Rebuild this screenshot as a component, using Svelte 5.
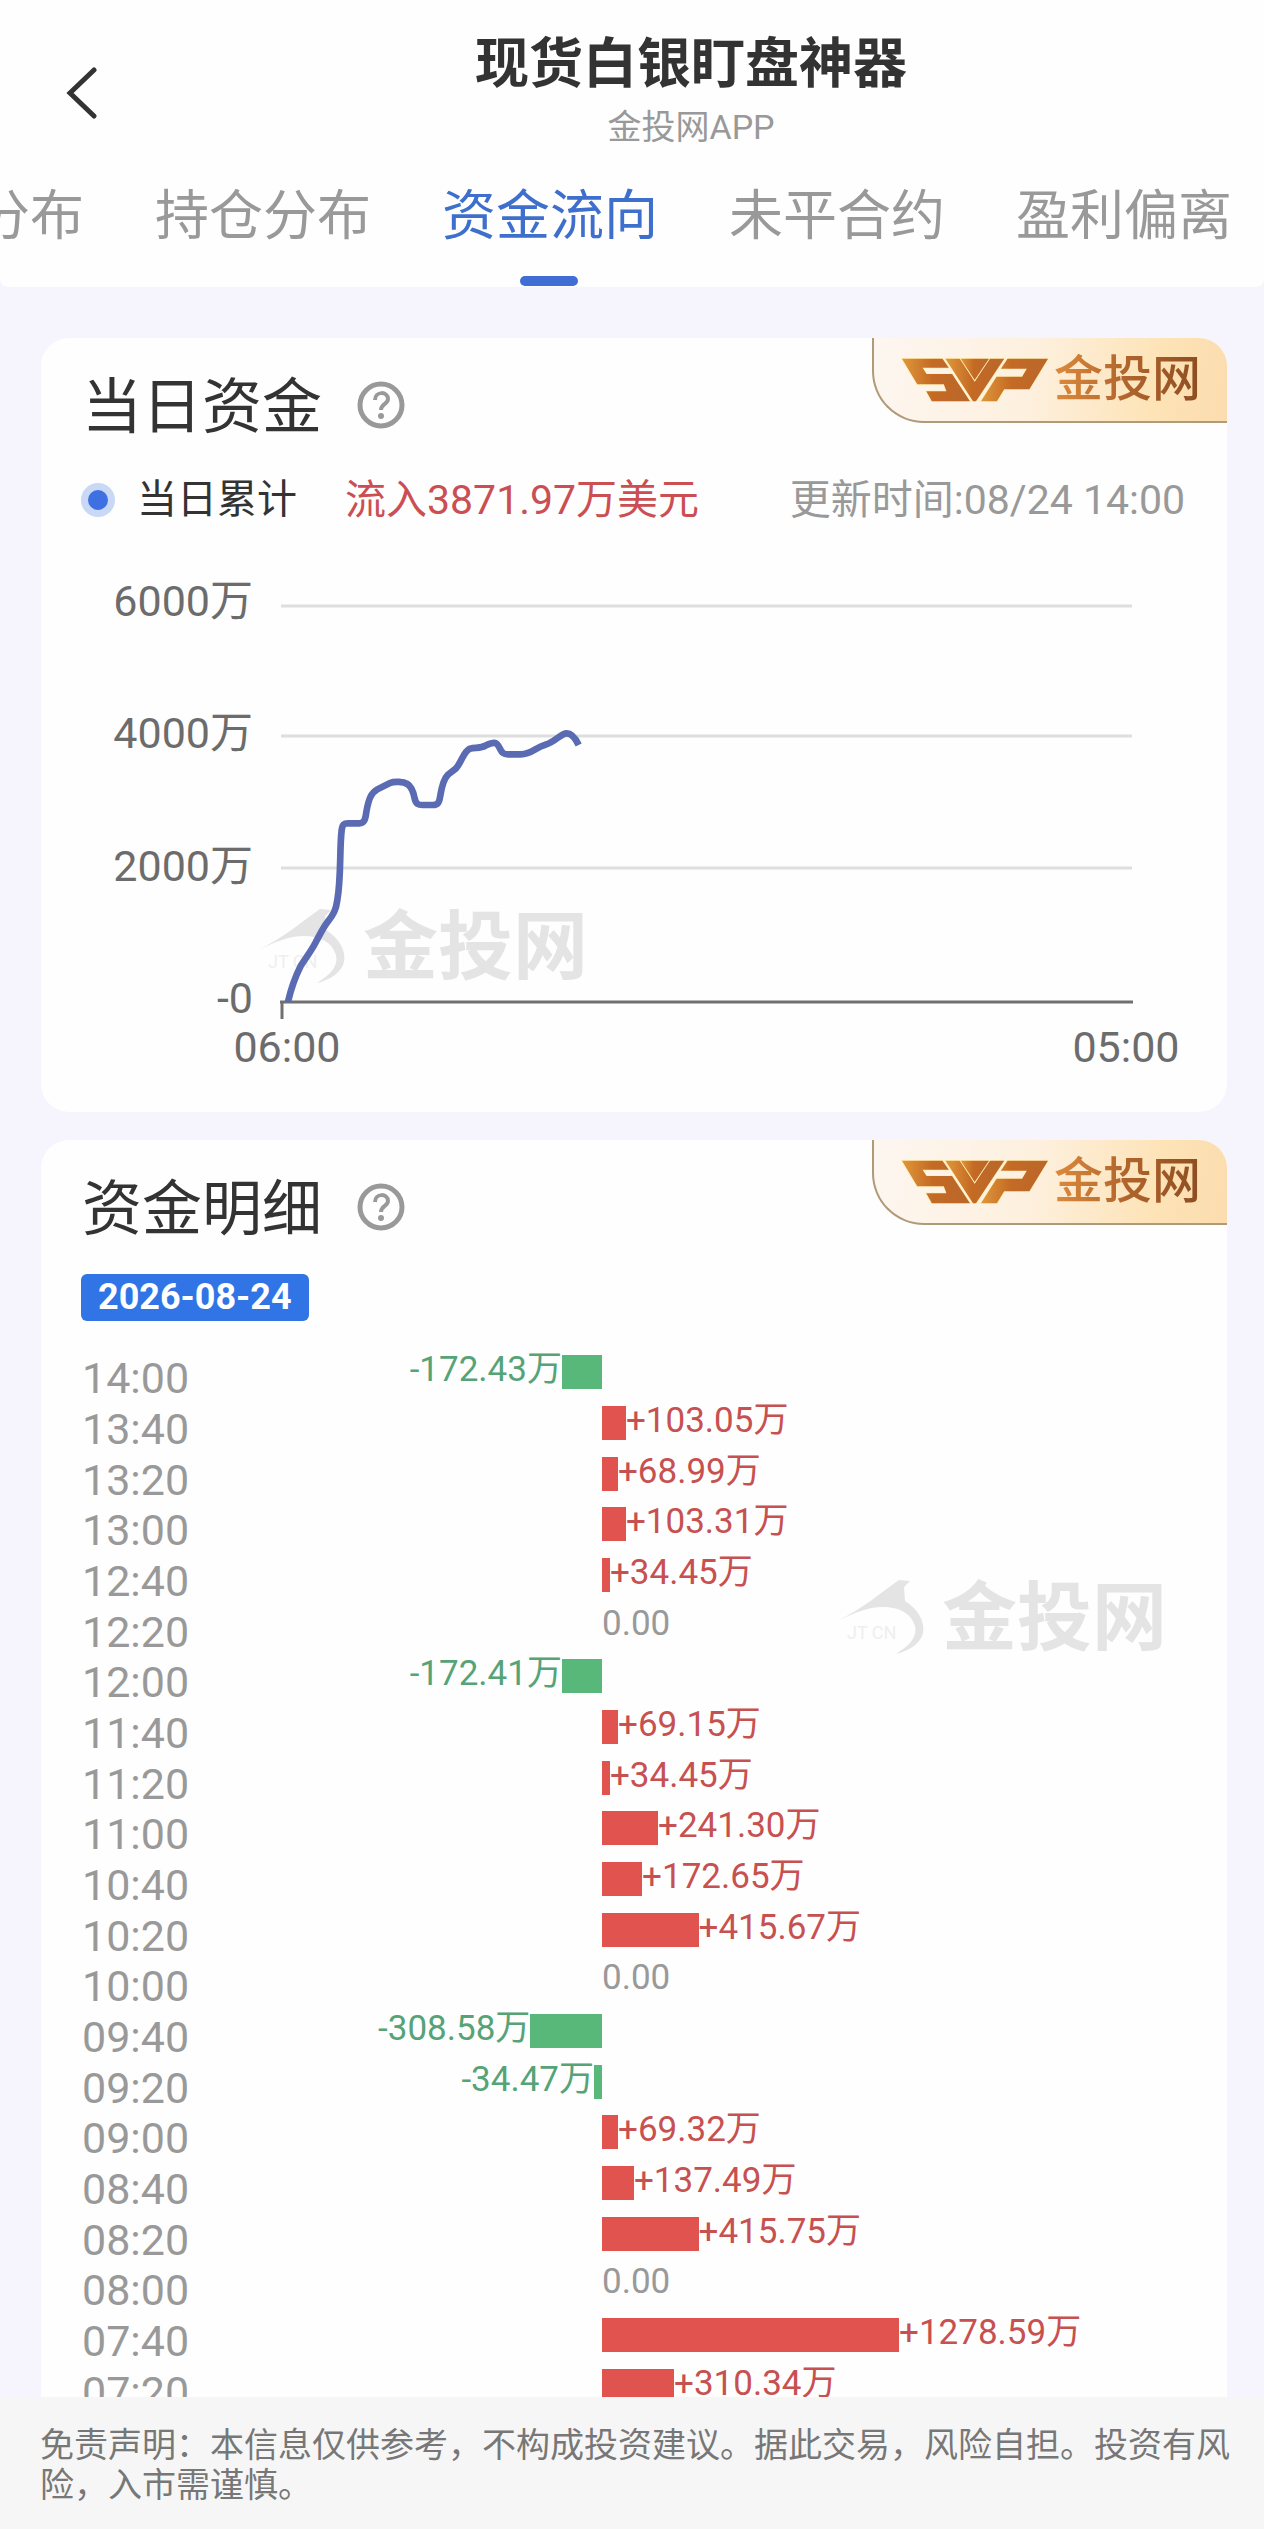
<script>
  const tabs = ['持仓分布', '资金流向', '未平合约', '盈利偏离'];
  let active = $state('资金流向');

  const flows = [
    ['14:00', -172.43], ['13:40', 103.05], ['13:20', 68.99], ['13:00', 103.31],
    ['12:40', 34.45], ['12:20', 0], ['12:00', -172.41], ['11:40', 69.15],
    ['11:20', 34.45], ['11:00', 241.3], ['10:40', 172.65], ['10:20', 415.67],
    ['10:00', 0], ['09:40', -308.58], ['09:20', -34.47], ['09:00', 69.32],
    ['08:40', 137.49], ['08:20', 415.75], ['08:00', 0], ['07:40', 1278.59],
    ['07:20', 310.34]
  ];

  // amounts (in 万) at which a bar fills its side of the zero line
  const NEGATIVE_MAX = 1722;
  const POSITIVE_MAX = 2518;

  const label = (v) => (v === 0 ? '0.00' : (v > 0 ? '+' : '') + v.toFixed(2) + '万');
  const size = (v) => (Math.abs(v) / (v < 0 ? NEGATIVE_MAX : POSITIVE_MAX)) * 100;
</script>

{#snippet badge(id)}
  <div class="badge">
    <svg viewBox="0 0 440 132" aria-label="SVP" role="img">
      <defs>
        <linearGradient id={id} x1="0" x2="1">
          <stop offset="0" stop-color="#e0973a" />
          <stop offset="0.45" stop-color="#c46a24" />
          <stop offset="1" stop-color="#b9672c" />
        </linearGradient>
      </defs>
      <g fill="url(#{id})" stroke="#fff0b8" stroke-width="5" paint-order="stroke">
        <path d="M0 2H122L141 29H62L74 48H151L205 130H90L73 100H134L126 79H46Z" />
        <path d="M131 2H177L219 71L262 2H308L223 130H214Z" />
        <path d="M177 2H262L219 66Z" />
        <path d="M318 2H440L384 94H308L286 130H238L285 56H362L376 32H298Z" />
      </g>
    </svg>
    <span>金投网</span>
  </div>
{/snippet}

{#snippet mark()}
  <path d="M0 43C22 33 44 14 60 3L71 4L65 10L66 24C80 33 86 45 84 56C82 66 70 74 57 77C73 67 78 59 76 49C72 36 60 30 44 30C28 30 16 36 0 43Z" fill="#e4e4e4" />
  <text x="8" y="62" font-size="18" fill="#efefef">JT CN</text>
  <text x="103" y="67" font-size="75" font-weight="700" fill="#e4e4e4">金投网</text>
{/snippet}

{#snippet help(name)}
  <button class="help" aria-label={name}>
    <svg viewBox="0 0 48 48" fill="none" stroke="#999" stroke-width="4">
      <circle cx="24" cy="24" r="21" stroke-width="5" />
      <path d="M18 19C18 10 31 10 31 18C31 23 24 23 24 29" />
      <circle cx="24" cy="35" r="3" fill="#999" stroke="none" />
    </svg>
  </button>
{/snippet}

<div class="app">
  <header>
    <div class="top">
      <button class="back" aria-label="返回">
        <svg viewBox="0 0 32 52" fill="none" stroke="#333" stroke-width="5" stroke-linecap="round">
          <path d="M28 3L4 26L28 49" />
        </svg>
      </button>
      <div class="brand">
        <h1>现货白银盯盘神器</h1>
        <p>金投网APP</p>
      </div>
    </div>
    <nav>
      <button class="tab">价格分布</button>
      {#each tabs as tab}
        <button class="tab" class:active={tab === active} onclick={() => (active = tab)}>{tab}</button>
      {/each}
    </nav>
  </header>

  <main>
    <section class="card">
      <div class="heading">
        <h2>当日资金</h2>
        {@render help('当日资金说明')}
      </div>
      {@render badge('gold-a')}
      <div class="summary">
        <i class="dot"></i>
        <span class="name">当日累计</span>
        <span class="inflow">流入3871.97万美元</span>
        <time>更新时间:08/24 14:00</time>
      </div>
      <svg class="chart" viewBox="0 0 1186 552" role="img" aria-label="当日资金走势">
        <svg class="mark" x="219" y="346" width="340" height="84" viewBox="0 0 340 84">{@render mark()}</svg>
        <g stroke="#dedede" stroke-width="3">
          <path d="M240 46H1091M240 176H1091M240 308H1091" />
        </g>
        <path d="M239 442H1092M241 442V459" fill="none" stroke="#707070" stroke-width="3" />
        <svg x="229" y="160" width="330" height="290" viewBox="0 0 990 870">
          <path
            d="M54 845C64 802 76 770 92 738C108 712 122 696 138 665C150 644 158 624 174 604C190 584 198 570 202 540C214 470 208 390 215 330C218 312 222 310 234 310H268C282 310 286 300 289 276C296 236 304 218 322 208L360 189C374 183 400 185 412 192C424 199 430 214 434 236C438 252 444 255 458 255H488C504 255 508 248 511 226C516 196 522 176 534 164L556 147C574 130 580 94 600 86C618 82 632 86 648 76C674 64 680 66 690 86C696 98 700 103 714 103H752C786 103 796 82 826 74C856 66 872 40 890 40C908 40 918 58 926 75"
            fill="none" stroke="#5a6bb3" stroke-width="20" />
        </svg>
        <g class="axis" text-anchor="end">
          <text x="212" y="56">6000万</text>
          <text x="212" y="188">4000万</text>
          <text x="212" y="321">2000万</text>
          <text x="212" y="453">-0</text>
        </g>
        <g class="axis" text-anchor="middle">
          <text x="246" y="502">06:00</text>
          <text x="1085" y="502">05:00</text>
        </g>
      </svg>
    </section>

    <section class="card detail">
      <div class="heading">
        <h2>资金明细</h2>
        {@render help('资金明细说明')}
      </div>
      {@render badge('gold-b')}
      <time class="date">2026-08-24</time>
      <svg class="mark watermark" viewBox="0 0 340 84" aria-hidden="true">{@render mark()}</svg>
      <ol>
        {#each flows as [time, value]}
          <li>
            <time>{time}</time>
            <div class="side left">
              {#if value < 0}
                <span class="down">{label(value)}</span>
                <i class="bar green" style="width: {size(value)}%"></i>
              {/if}
            </div>
            <div class="side">
              {#if value >= 0}
                <i class="bar red" style="width: {size(value)}%"></i>
                <span class:up={value > 0}>{label(value)}</span>
              {/if}
            </div>
          </li>
        {/each}
      </ol>
    </section>
  </main>

  <footer>
    免责声明：本信息仅供参考，不构成投资建议。据此交易，风险自担。投资有风险，入市需谨慎。
  </footer>
</div>

<style>
  :global(body) {
    margin: 0;
  }
  .app {
    display: flex;
    flex-direction: column;
    height: 100vh;
    background: #f6f5fe;
    color: #333;
    font-family: Roboto, 'Noto Sans CJK SC', sans-serif;
  }
  h1,
  h2,
  p,
  ol {
    margin: 0;
    padding: 0;
    font-weight: 400;
  }
  button {
    padding: 0;
    border: 0;
    background: none;
    color: inherit;
    font: inherit;
  }
  svg {
    display: block;
  }

  header {
    flex: none;
    background: #fefefe;
    border-radius: 0 0 8px 8px;
  }
  .top {
    display: grid;
    grid-template-columns: 118px 1fr;
    padding: 33px 0 38px;
  }
  .back {
    justify-self: start;
    align-self: center;
    padding: 6px 0 0 66px;
  }
  .back svg {
    width: 32px;
    height: 52px;
  }
  .brand {
    display: grid;
    gap: 10px;
    text-align: center;
  }
  h1 {
    font-size: 54px;
    line-height: 64px;
    font-weight: 700;
  }
  .brand p {
    color: #999;
    font-size: 34px;
    line-height: 40px;
  }
  nav {
    display: flex;
    justify-content: flex-end;
    gap: 71px;
    padding-right: 32px;
    overflow: hidden;
  }
  .tab {
    position: relative;
    flex: none;
    padding-bottom: 38px;
    color: #999;
    font-size: 54px;
    line-height: 64px;
    white-space: nowrap;
  }
  .tab.active {
    color: #3f6fcd;
  }
  .tab.active::after {
    content: '';
    position: absolute;
    bottom: 1px;
    left: 50%;
    width: 58px;
    height: 10px;
    margin-left: -30px;
    border-radius: 5px;
    background: #3f6dd3;
  }

  main {
    flex: 1;
    min-height: 0;
    display: flex;
    flex-direction: column;
    gap: 28px;
    padding: 51px 37px 0 41px;
    overflow: hidden;
  }
  .card {
    position: relative;
    flex: none;
    border-radius: 28px;
    background: #fefefe;
    overflow: hidden;
  }
  .heading {
    display: flex;
    align-items: center;
    gap: 35px;
    padding: 30px 41px 0;
  }
  h2 {
    font-size: 60px;
    line-height: 80px;
  }
  .help {
    padding-bottom: 6px;
  }
  .help svg {
    width: 48px;
    height: 48px;
  }
  .badge {
    position: absolute;
    top: 0;
    right: 0;
    box-sizing: border-box;
    display: flex;
    align-items: center;
    gap: 6px;
    width: 355px;
    height: 85px;
    padding-left: 28px;
    border-left: 2px solid #b09a78;
    border-bottom: 2px solid #b09a78;
    border-radius: 0 14px 0 52px;
    background: linear-gradient(100deg, #fdf7f1, #fdf0de 45%, #fde3b6 80%, #fbdcae);
  }
  .badge svg {
    width: 146px;
    height: 44px;
    overflow: visible;
  }
  .badge span {
    background: linear-gradient(90deg, #dc8a3c, #b0642c 50%, #8d4d22);
    background-clip: text;
    color: transparent;
    font-size: 49px;
    font-weight: 500;
    line-height: 72px;
  }

  .summary {
    display: flex;
    align-items: center;
    padding: 22px 42px 0 40px;
    font-size: 41px;
    line-height: 60px;
    white-space: nowrap;
  }
  .dot {
    width: 20px;
    height: 20px;
    border: 7px solid #c9d9f5;
    border-radius: 50%;
    background: #3f70e2;
  }
  .name {
    margin: 0 48px 0 22px;
    font-size: 40px;
  }
  .inflow {
    color: #cb4f52;
  }
  .summary time {
    margin-left: auto;
    color: #999;
  }
  .chart {
    width: 100%;
    margin-top: 30px;
  }
  .mark {
    overflow: visible;
  }
  .axis {
    fill: #6c6c6c;
    font-size: 43px;
  }

  .detail {
    border-radius: 28px 28px 0 0;
  }
  .date {
    display: block;
    width: fit-content;
    margin: 24px 0 26px 40px;
    padding: 0 17px;
    border-radius: 6px;
    background: #3074e6;
    color: #fff;
    font-size: 36px;
    font-weight: 700;
    line-height: 47px;
  }
  .watermark {
    position: absolute;
    top: 437px;
    right: 48px;
    width: 340px;
  }
  ol {
    position: relative;
    display: grid;
    grid-template-rows: repeat(21, 1fr);
    height: 1064px;
    padding: 0 40px 0 41px;
    list-style: none;
  }
  li {
    display: grid;
    grid-template-columns: 120px 400fr 585fr;
    align-items: center;
    min-height: 0;
  }
  li time {
    padding-top: 12px;
    color: #999;
    font-size: 43px;
    line-height: 36px;
  }
  .side {
    display: flex;
    align-items: center;
    min-width: 0;
    color: #999;
    font-size: 35px;
    line-height: 34px;
    white-space: nowrap;
  }
  .side span {
    padding-bottom: 4px;
  }
  .left {
    justify-content: flex-end;
  }
  .bar {
    flex: none;
    height: 34px;
  }
  .green {
    background: #57b87a;
  }
  .red {
    background: #e0534f;
  }
  .side .down {
    color: #55a377;
  }
  .side .up {
    color: #c75050;
  }

  footer {
    flex: none;
    padding: 28px 33px 24px 40px;
    background: #f6f6f6;
    color: #777;
    font-size: 34px;
    line-height: 40px;
  }
</style>
